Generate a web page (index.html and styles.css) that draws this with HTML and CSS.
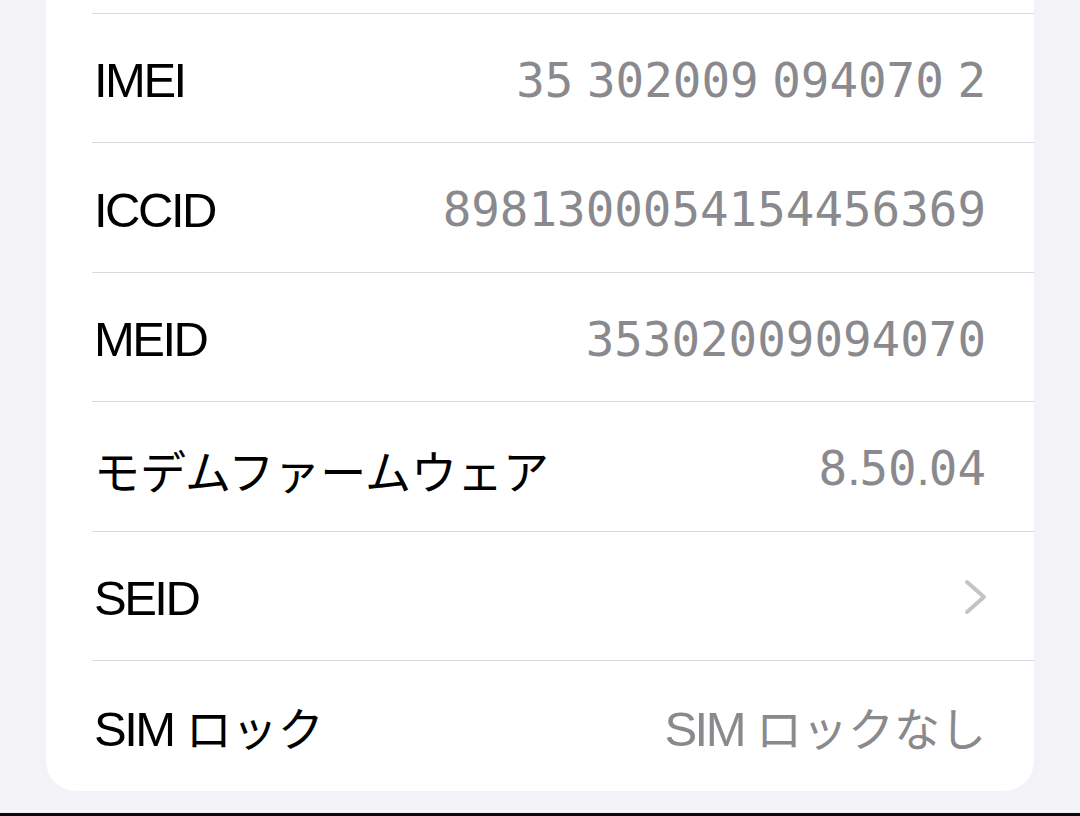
FILE: index.html
```html
<!DOCTYPE html>
<html lang="ja">
<head>
<meta charset="utf-8">
<title>情報</title>
<link rel="stylesheet" href="styles.css">
</head>
<body>
<div class="screen">
  <div class="card">
    <div class="row cut"></div>
    <div class="row">
      <span class="label">IMEI</span>
      <span class="value num num-spaced">35 302009 094070 2</span>
    </div>
    <div class="row">
      <span class="label">ICCID</span>
      <span class="value num">8981300054154456369</span>
    </div>
    <div class="row">
      <span class="label">MEID</span>
      <span class="value num">35302009094070</span>
    </div>
    <div class="row">
      <span class="label ja">モデムファームウェア</span>
      <span class="value num">8<span class="dot">.</span>50<span class="dot">.</span>04</span>
    </div>
    <div class="row">
      <span class="label">SEID</span>
      <svg class="chevron" width="24" height="36" viewBox="0 0 24 36" aria-hidden="true">
        <path d="M3 3 L20 18 L3 33" fill="none" stroke="#c4c4c7" stroke-width="4" stroke-linecap="round" stroke-linejoin="round"/>
      </svg>
    </div>
    <div class="row last">
      <span class="label">SIM<span class="ja jgap">ロック</span></span>
      <span class="value">SIM<span class="ja jgap">ロックなし</span></span>
    </div>
  </div>
  <div class="bottom">
    <div class="bottom-line"></div>
    <div class="bottom-bar"></div>
  </div>
</div>
</body>
</html>
```

FILE: styles.css
```css
html, body {
  margin: 0;
  padding: 0;
}

body {
  background: #f2f2f7;
  width: 1080px;
  height: 816px;
  overflow: hidden;
  font-family: "Liberation Sans", "Noto Sans CJK JP", sans-serif;
}

.screen {
  display: flex;
  flex-direction: column;
  height: 816px;
}

.card {
  margin: 0 46px;
  background: #ffffff;
  border-radius: 0 0 30px 30px;
  display: flex;
  flex-direction: column;
}

.row {
  margin-left: 46px;
  padding-right: 48px;
  height: 129.4px;
  box-sizing: border-box;
  border-bottom: 1px solid #d9d9dc;
  display: flex;
  align-items: center;
  justify-content: space-between;
}

.row.cut {
  height: 14px;
}

.row.last {
  border-bottom: none;
  height: 130px;
}

.label {
  color: #000000;
  font-size: 49px;
  line-height: 1;
  letter-spacing: -2.5px;
  padding-left: 2px;
  padding-top: 5px;
}

.value {
  color: #8a8a8e;
  font-size: 49px;
  line-height: 1;
  letter-spacing: -2.5px;
  padding-top: 5px;
}

.num {
  font-family: "DejaVu Sans Mono", monospace;
  font-size: 47.5px;
  letter-spacing: 0;
}

.num-spaced {
  word-spacing: -15px;
}

.dot {
  font-family: "Liberation Sans", sans-serif;
  letter-spacing: -1px;
}

.ja {
  font-family: "Noto Sans CJK JP", sans-serif;
  font-size: 46px;
  letter-spacing: 0;
}

.jgap {
  margin-left: 12px;
}

.chevron {
  display: block;
  margin-top: 3px;
  margin-right: -2px;
}

.bottom {
  margin-top: auto;
  display: flex;
  flex-direction: column;
}

.bottom-line {
  height: 1px;
  background: #fbfbfd;
  margin-bottom: 2px;
}

.bottom-bar {
  height: 3px;
  background: #0a0a0a;
}
```
